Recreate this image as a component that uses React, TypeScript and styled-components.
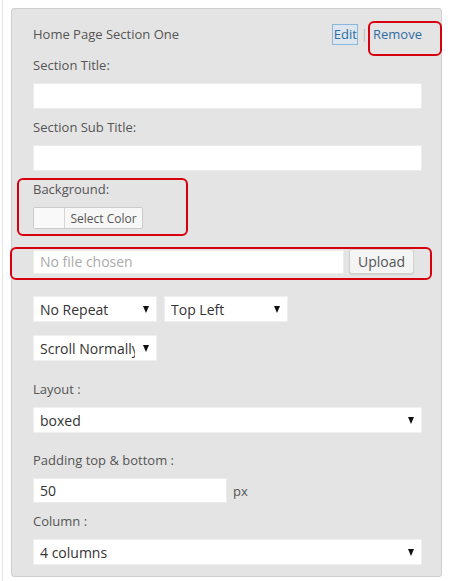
import styled, { createGlobalStyle } from "styled-components";

const Global = createGlobalStyle`
  html, body {
    margin: 0;
    background: #fff;
  }
  body {
    font-family: "Open Sans", "Liberation Sans", Arial, sans-serif;
    color: #555;
  }
`;

const Page = styled.div`
  margin-left: 2px;
  border-left: 1px solid #e4e4e4;
  min-height: 581px;
  padding-top: 8px;
  box-sizing: border-box;
  position: relative;
`;

const Panel = styled.div`
  margin-left: 8px;
  width: 431px;
  height: 569px;
  box-sizing: border-box;
  background: #e4e4e4;
  border: 1px solid #cfcfcf;
  border-radius: 3px;
  padding: 14px 19px 0 21px;
  display: flex;
  flex-direction: column;
`;

const Header = styled.div`
  display: flex;
  align-items: center;
  height: 22px;
  font-size: 13px;
  margin-bottom: 10px;
`;

const Title = styled.div`
  flex: 1;
  color: #555;
`;

const Actions = styled.div`
  display: flex;
  align-items: center;
  gap: 3px;
  font-size: 13px;
  color: #2e6da4;
`;

const EditLink = styled.span`
  border: 1px solid #8db6dc;
  background: #dde6ee;
  padding: 1px 0 2px 1px;
  line-height: 16px;
`;

const Sep = styled.span`
  color: #bbb;
  margin-right: 2px;
`;

const Label = styled.div<{ $top?: number }>`
  font-size: 13px;
  line-height: 20px;
  margin-top: ${(p) => p.$top ?? 8}px;
  margin-bottom: 8px;
`;

const TextBox = styled.div<{ $w?: number; $h?: number }>`
  width: ${(p) => (p.$w ? `${p.$w}px` : "100%")};
  height: ${(p) => p.$h ?? 26}px;
  box-sizing: border-box;
  background: #fff;
  border: 1px solid #ececec;
  font-size: 14px;
  color: #333;
  display: flex;
  align-items: center;
  padding-left: 6px;
`;

const ColorPicker = styled.div`
  display: flex;
  height: 22px;
  width: 110px;
  box-sizing: border-box;
  border: 1px solid #cbcbcb;
  border-radius: 2px;
  background: #f7f7f7;
`;

const Swatch = styled.div`
  width: 30px;
  background: #f9f9f9;
  border-right: 1px solid #d6d6d6;
`;

const PickerLabel = styled.div`
  flex: 1;
  font-size: 12px;
  color: #555;
  display: flex;
  align-items: center;
  justify-content: center;
`;

const FileRow = styled.div`
  display: flex;
  align-items: center;
  gap: 5px;
  margin-top: 20px;
  margin-right: 8px;
`;

const FileField = styled(TextBox)`
  flex: 1;
  height: 24px;
  color: #aaa;
`;

const Button = styled.div`
  width: 65px;
  height: 25px;
  box-sizing: border-box;
  border: 1px solid #d0d0d0;
  border-radius: 3px;
  background: #f4f4f4;
  box-shadow: 0 1px 1px rgba(0, 0, 0, 0.08);
  font-size: 14px;
  color: #555;
  display: flex;
  align-items: center;
  justify-content: center;
`;

const SelectRow = styled.div<{ $top: number }>`
  display: flex;
  gap: 7px;
  margin-top: ${(p) => p.$top}px;
`;

const SelectBox = styled.div<{ $w?: number }>`
  width: ${(p) => (p.$w ? `${p.$w}px` : "100%")};
  height: 26px;
  box-sizing: border-box;
  background: #fff;
  border: 1px solid #efefef;
  display: flex;
  align-items: center;
  padding: 0 7px 0 6px;
  font-size: 14px;
  color: #333;
`;

const SelectText = styled.span`
  flex: 1;
  white-space: nowrap;
  overflow: hidden;
`;

const Arrow = styled.span`
  width: 0;
  height: 0;
  margin-left: 8px;
  border-left: 3.5px solid transparent;
  border-right: 3.5px solid transparent;
  border-top: 7px solid #111;
`;

const PxRow = styled.div`
  display: flex;
  align-items: center;
  gap: 6px;
  font-size: 13px;
`;

const Mark = styled.div<{ $x: number; $y: number; $w: number; $h: number }>`
  position: absolute;
  left: ${(p) => p.$x}px;
  top: ${(p) => p.$y}px;
  width: ${(p) => p.$w}px;
  height: ${(p) => p.$h}px;
  box-sizing: border-box;
  border: 2px solid #d7000f;
  border-radius: 6px;
  pointer-events: none;
`;

function Select({ value, width }: { value: string; width?: number }) {
  return (
    <SelectBox $w={width}>
      <SelectText>{value}</SelectText>
      <Arrow />
    </SelectBox>
  );
}

export default function App() {
  return (
    <>
      <Global />
      <Page>
        <Panel>
          <Header>
            <Title>Home Page Section One</Title>
            <Actions>
              <EditLink>Edit</EditLink>
              <Sep>|</Sep>
              <span>Remove</span>
            </Actions>
          </Header>

          <Label $top={0}>Section Title:</Label>
          <TextBox />

          <Label>Section Sub Title:</Label>
          <TextBox />

          <Label>Background:</Label>
          <ColorPicker>
            <Swatch />
            <PickerLabel>Select Color</PickerLabel>
          </ColorPicker>

          <FileRow>
            <FileField>No file chosen</FileField>
            <Button>Upload</Button>
          </FileRow>

          <SelectRow $top={22}>
            <Select value="No Repeat" width={124} />
            <Select value="Top Left" width={124} />
          </SelectRow>
          <SelectRow $top={13}>
            <Select value="Scroll Normally" width={124} />
          </SelectRow>

          <Label $top={18}>Layout :</Label>
          <Select value="boxed" />

          <Label $top={17}>Padding top &amp; bottom :</Label>
          <PxRow>
            <TextBox $w={194} $h={25}>50</TextBox>
            <span>px</span>
          </PxRow>

          <Label>Column :</Label>
          <Select value="4 columns" />
        </Panel>

        <Mark $x={365} $y={21} $w={74} $h={35} />
        <Mark $x={14} $y={178} $w={171} $h={58} />
        <Mark $x={7} $y={247} $w={422} $h={33} />
      </Page>
    </>
  );
}
